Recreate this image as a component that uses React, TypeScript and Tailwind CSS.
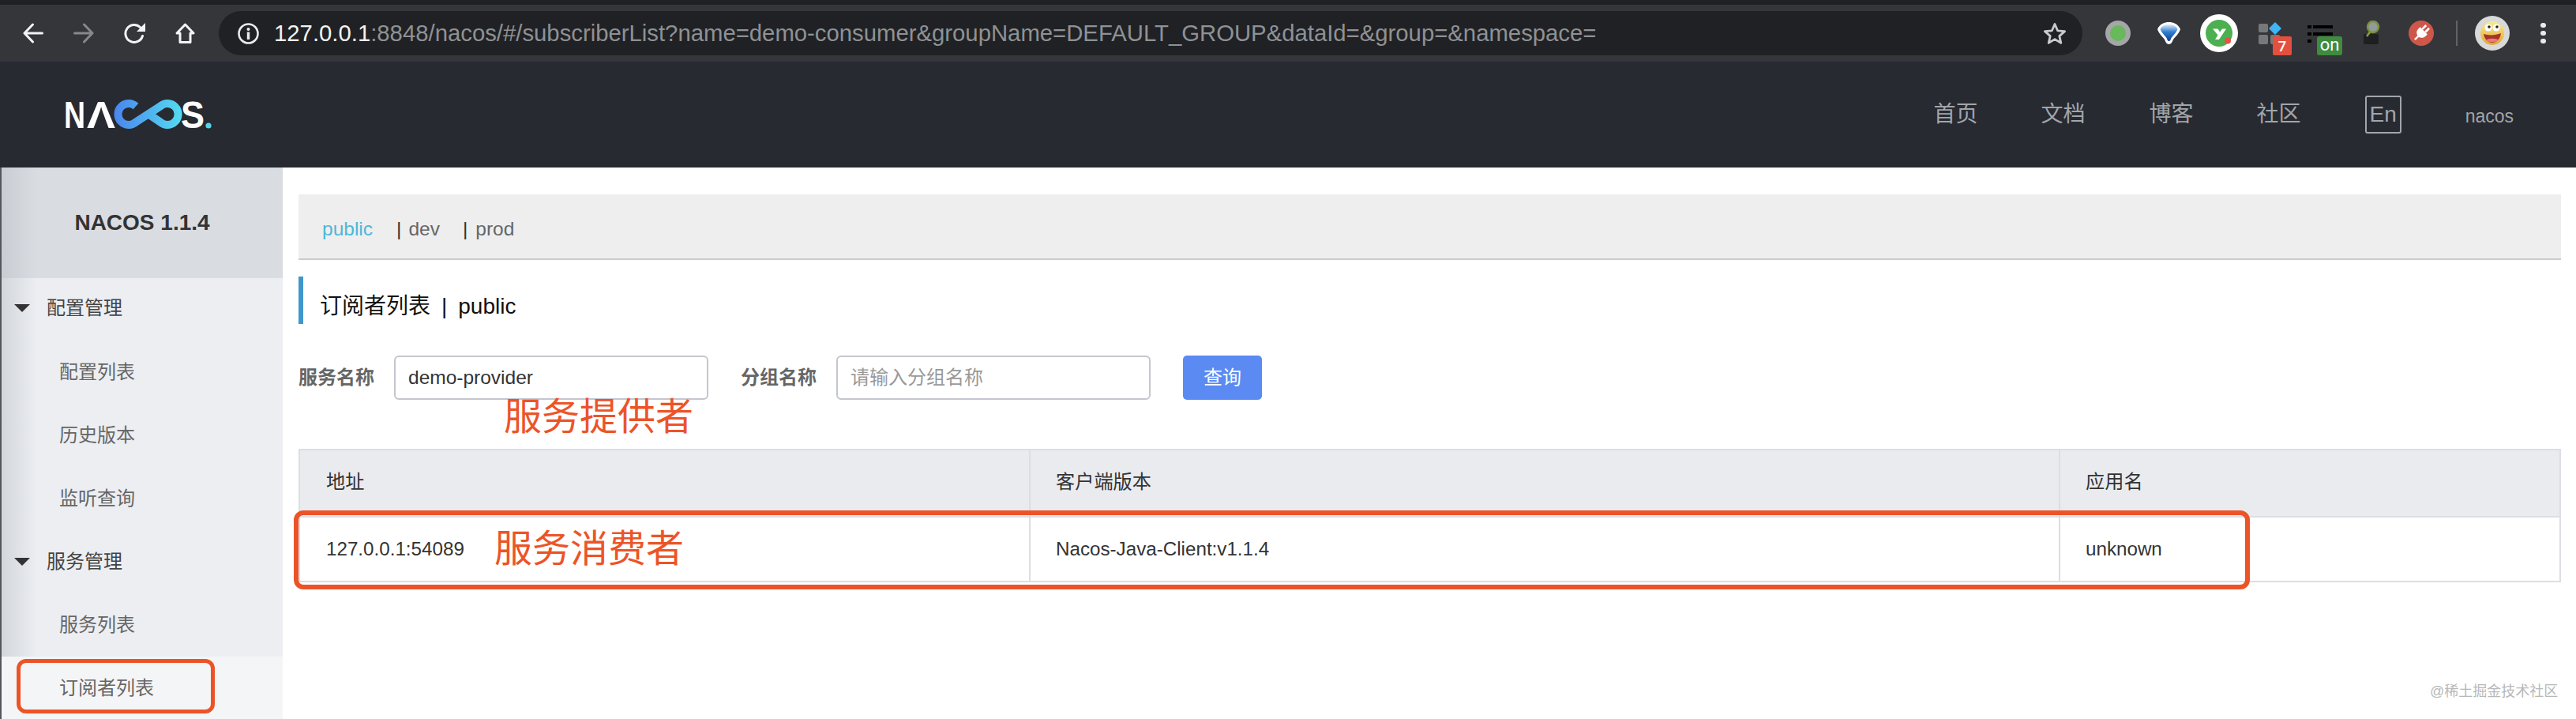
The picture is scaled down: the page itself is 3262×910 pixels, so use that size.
import React from "react";

const URL_REST =
  ":8848/nacos/#/subscriberList?name=demo-consumer&groupName=DEFAULT_GROUP&dataId=&group=&namespace=";

function Logo() {
  return (
    <svg width="210" height="70" viewBox="70 108 210 70">
      <defs>
        <linearGradient id="loop" x1="145" y1="0" x2="231" y2="0" gradientUnits="userSpaceOnUse">
          <stop offset="0" stopColor="#4a86ee" />
          <stop offset="1" stopColor="#54dcf0" />
        </linearGradient>
      </defs>
      <text x="81" y="160" fontFamily="Liberation Sans" fontWeight="700" fontSize="49" fill="#fff" textLength="27" lengthAdjust="spacingAndGlyphs">N</text>
      <text x="110" y="160" fontFamily="Liberation Sans" fontWeight="700" fontSize="49" fill="#fff" textLength="36" lengthAdjust="spacingAndGlyphs">Λ</text>
      <path d="M172 132.500A13.500 13.500 0 1 0 172 152.500L203 132.500A13.500 13.500 0 1 1 203 152.500L189 143" fill="none" stroke="url(#loop)" strokeWidth="10" />
      <text x="229" y="160" fontFamily="Liberation Sans" fontWeight="700" fontSize="49" fill="#fff" textLength="30" lengthAdjust="spacingAndGlyphs">S</text>
      <circle cx="264" cy="157" r="3.600" fill="#54d4ea" />
    </svg>
  );
}

function Toolbar() {
  return (
    <div className="flex h-[72px] shrink-0 items-center bg-[#35363a] pl-[29px]">
      <svg width="26" height="26" viewBox="0 0 26 26" fill="none" stroke="#f1f3f4" strokeWidth="3" strokeLinecap="round" strokeLinejoin="round">
        <path d="M24.500 13H2M12.500 2 2 13l10.500 11" />
      </svg>
      <svg className="ml-[38px]" width="26" height="26" viewBox="0 0 26 26" fill="none" stroke="#87888a" strokeWidth="3" strokeLinecap="round" strokeLinejoin="round">
        <path d="M1.500 13H24M13.500 2 24 13 13.500 24" />
      </svg>
      <svg className="ml-[38px]" width="28" height="26" viewBox="0 0 28 26">
        <path d="M23.500 16.500A11 11 0 1 1 20.500 5.500" fill="none" stroke="#f1f3f4" strokeWidth="3" strokeLinecap="round" />
        <path d="M27 0v11H16z" fill="#f1f3f4" />
      </svg>
      <svg className="ml-[37px]" width="25" height="26" viewBox="0 0 25 26" fill="none" stroke="#f1f3f4" strokeWidth="3" strokeLinejoin="round">
        <path d="M2 13 12.500 2 23 13h-4v11.500H6V13z" />
      </svg>
      <div className="ml-[30px] flex h-[56px] w-[2360px] items-center rounded-full bg-[#202124] pl-[24px] pr-[20px]">
        <svg width="27" height="27" viewBox="0 0 27 27">
          <circle cx="13.500" cy="13.500" r="12" fill="none" stroke="#e8eaed" strokeWidth="2.600" />
          <circle cx="13.500" cy="8" r="2" fill="#e8eaed" />
          <rect x="11.800" y="11.500" width="3.400" height="9.500" fill="#e8eaed" />
        </svg>
        <div className="ml-[19px] whitespace-nowrap text-[29.300px] leading-none text-[#f1f3f4]">
          127.0.0.1<span className="text-[#8f9194]">{URL_REST}</span>
        </div>
        <svg className="ml-auto" width="30" height="28" viewBox="0 0 30 28" fill="none" stroke="#c8cacc" strokeWidth="2.800" strokeLinejoin="round">
          <path d="M15 2.500l3.600 8.300 9 .8-6.800 6 2 8.800L15 21.600 7.200 26.400l2-8.800-6.800-6 9-.8z" />
        </svg>
      </div>

      <div className="ml-[29px] flex h-[32px] w-[32px] items-center justify-center rounded-full bg-[#a5a6a7]">
        <div className="h-[20px] w-[20px] rounded-full bg-[#68b85c]" />
      </div>
      <svg className="ml-[33px]" width="31" height="30" viewBox="0 0 31 30">
        <defs>
          <linearGradient id="gem" x1="0" y1="0" x2="0" y2="1">
            <stop offset="0" stopColor="#dfeaf5" />
            <stop offset="0.45" stopColor="#2f7fd4" />
            <stop offset="1" stopColor="#123f8c" />
          </linearGradient>
        </defs>
        <path d="M1 10C4 3 10 1 15.500 1S27 3 30 10c-2 6-7 10-9 13-1 2-2 6-5.500 6S11 25 10 23C8 20 3 16 1 10z" fill="#fff" />
        <path d="M4.500 10C7 5 11 4 15.500 4s8.500 1 11 6c-2 5-6 8-8 11-1 2-1 4-3 4s-2-2-3-4c-2-3-6-6-8-11z" fill="url(#gem)" />
      </svg>
      <div className="ml-[24px] flex h-[48px] w-[48px] items-center justify-center rounded-full bg-white">
        <svg width="34" height="34" viewBox="0 0 34 34">
          <circle cx="17" cy="17" r="17" fill="#4caf50" />
          <path d="M9 11.500h6.500l2.500 4 3-4h5L17 25h-5l3.500-5.500z" fill="#fff" />
          <circle cx="28" cy="26.500" r="4" fill="#ea5047" />
        </svg>
      </div>
      <div className="relative ml-[26px] mt-[16px] h-[40px] w-[42px] self-start">
        <svg width="32" height="28" viewBox="0 0 32 28" className="absolute left-0 top-[8px] overflow-visible">
          <rect x="0" y="0" width="12" height="11" rx="2" fill="#76787c" />
          <rect x="0" y="14" width="12" height="12" rx="2" fill="#76787c" />
          <rect x="15" y="14" width="12" height="12" rx="2" fill="#76787c" />
          <path d="M21 -2l8 8-8 8-8-8z" fill="#3fb5f5" />
        </svg>
        <div className="absolute left-[18px] top-[24px] flex h-[24px] w-[24px] items-center justify-center rounded-[2px] bg-[#e4503f] font-['Roboto',sans-serif] text-[19px] font-medium leading-none text-white">
          7
        </div>
      </div>
      <div className="relative ml-[20px] mt-[16px] h-[40px] w-[44px] self-start">
        <div className="absolute left-0 top-[10px] flex flex-col gap-[5px]">
          <div className="flex gap-[2px]"><div className="h-[4px] w-[5px] bg-black" /><div className="h-[4px] w-[25px] bg-black" /></div>
          <div className="flex gap-[2px]"><div className="h-[4px] w-[5px] bg-black" /><div className="h-[4px] w-[25px] bg-black" /></div>
          <div className="flex gap-[2px]"><div className="h-[4px] w-[5px] bg-black" /></div>
        </div>
        <div className="absolute left-[12px] top-[24px] flex h-[24px] w-[32px] items-center justify-center rounded-[3px] bg-[#3f8c3f] pb-[2px] font-['Roboto',sans-serif] text-[22px] leading-none text-white">
          on
        </div>
      </div>
      <svg className="ml-[27px]" width="22" height="32" viewBox="0 0 22 32">
        <rect x="0" y="17" width="19" height="13" rx="2" fill="#1e1f21" />
        <path d="M4 20l6-8" stroke="#8aa03c" strokeWidth="2.500" />
        <circle cx="12" cy="8" r="7" fill="#8f9c98" stroke="#7d9140" strokeWidth="2.500" />
      </svg>
      <svg className="ml-[35px]" width="32" height="32" viewBox="0 0 32 32">
        <circle cx="16" cy="16" r="16" fill="#cf574a" />
        <g transform="rotate(45 16 16)" fill="#fff">
          <rect x="12" y="4.500" width="2.600" height="7" />
          <rect x="17.400" y="4.500" width="2.600" height="7" />
          <path d="M9.500 11.500h13V15a6.500 6.500 0 0 1-13 0z" />
          <rect x="14.800" y="21" width="2.400" height="6.500" />
        </g>
      </svg>
      <div className="ml-[28px] h-[32px] w-[2px] bg-[#626366]" />
      <svg className="ml-[22px]" width="44" height="44" viewBox="0 0 44 44">
        <defs>
          <linearGradient id="face" x1="0" y1="0" x2="0" y2="1">
            <stop offset="0" stopColor="#f8ec92" />
            <stop offset="1" stopColor="#e2a62e" />
          </linearGradient>
        </defs>
        <circle cx="22" cy="22" r="22" fill="#d9d9d9" />
        <circle cx="22" cy="22" r="15" fill="url(#face)" />
        <circle cx="17" cy="15" r="4.500" fill="#fff" />
        <circle cx="27" cy="15" r="4.500" fill="#fff" />
        <circle cx="18" cy="14" r="1.800" fill="#222" />
        <circle cx="28" cy="14" r="1.800" fill="#222" />
        <path d="M11 23c6 2 15 2 22-1-1 8-6 12-11 12s-10-4-11-11z" fill="#a8322a" />
        <path d="M14 31c3-3 13-3 16 0-4 3-12 3-16 0z" fill="#e87a80" />
      </svg>
      <div className="ml-[39px] flex flex-col gap-[3.500px]">
        <div className="h-[6.500px] w-[6.500px] rounded-full bg-[#e8eaed]" />
        <div className="h-[6.500px] w-[6.500px] rounded-full bg-[#e8eaed]" />
        <div className="h-[6.500px] w-[6.500px] rounded-full bg-[#e8eaed]" />
      </div>
    </div>
  );
}

function Header() {
  return (
    <div className="flex h-[134px] shrink-0 items-center bg-[#272a31] pl-[70px] text-[#a2a5a9]">
      <Logo />
      <div className="ml-auto flex items-center text-[28px] leading-none">
        <span>首页</span>
        <span className="ml-[80px]">文档</span>
        <span className="ml-[81px]">博客</span>
        <span className="ml-[80px]">社区</span>
        <span className="ml-[81px] flex h-[48px] w-[46px] items-center justify-center rounded-[3px] border-2 border-[#a2a5a9]">En</span>
        <span className="ml-[81px] mr-[79px] mt-[4px] text-[23px]">nacos</span>
      </div>
    </div>
  );
}

function Sidebar() {
  const Group = ({ label, first }: { label: string; first?: boolean }) => (
    <div className={first ? "flex h-[79px] items-center pb-[3px] pl-[16px] text-[#444]" : "flex h-[80px] items-center pl-[16px] text-[#444]"}>
      <div className="h-0 w-0 border-x-[10px] border-t-[10px] border-x-transparent border-t-[#333]" />
      <span className="ml-[21px]">{label}</span>
    </div>
  );
  const Item = ({ label, active }: { label: string; active?: boolean }) => (
    <div className={active ? "flex h-[79px] items-center bg-[#f4f5f7] pl-[73px] text-[#666]" : "flex h-[80px] items-center pl-[73px] text-[#666]"}>
      {label}
    </div>
  );
  return (
    <div className="flex w-[358px] shrink-0 flex-col border-l-2 border-[#55575c] bg-[linear-gradient(to_right,#d3d6db,#eceef2_45px)] text-[24px] leading-none">
      <div className="flex h-[140px] items-center justify-center bg-[linear-gradient(to_right,#c9ccd2,#d9dce1_45px)] text-[28px] font-bold text-[#333]">
        NACOS 1.1.4
      </div>
      <Group label="配置管理" first />
      <Item label="配置列表" />
      <Item label="历史版本" />
      <Item label="监听查询" />
      <Group label="服务管理" />
      <Item label="服务列表" />
      <Item label="订阅者列表" active />
    </div>
  );
}

function Main() {
  return (
    <div className="flex-1 pl-[20px] pr-[19px] pt-[34px]">
      <div className="flex h-[83px] items-center border-b-2 border-[#cccccc] bg-[#eeeeee] pl-[30px] pt-[8px] text-[24.500px] leading-none text-[#666]">
        <span className="text-[#4fb7d6]">public</span>
        <span className="ml-[30px] text-[#333]">|</span>
        <span className="ml-[9px]">dev</span>
        <span className="ml-[29px] text-[#333]">|</span>
        <span className="ml-[10px]">prod</span>
      </div>
      <div className="mt-[21px] flex h-[60px] items-center border-l-[6px] border-[#3f97cb] pl-[21px] pt-[16px] text-[28px] leading-none text-[#111]">
        <span>订阅者列表</span>
        <span className="ml-[14px]">|</span>
        <span className="ml-[14px]">public</span>
      </div>
      <div className="mt-[40px] flex h-[56px] items-center text-[24px]">
        <span className="w-[96px] font-bold text-[#666]">服务名称</span>
        <input
          readOnly
          value="demo-provider"
          className="ml-[25px] h-[56px] w-[398px] rounded-[6px] border-2 border-[#c4c6cf] bg-white px-[16px] text-[24.500px] text-[#333] outline-none"
        />
        <span className="ml-[41px] w-[96px] font-bold text-[#666]">分组名称</span>
        <input
          readOnly
          placeholder="请输入分组名称"
          className="ml-[25px] h-[56px] w-[398px] rounded-[6px] border-2 border-[#c4c6cf] bg-white px-[16px] text-[24px] text-[#333] outline-none placeholder:text-[#999]"
        />
        <button className="ml-[41px] h-[56px] w-[100px] rounded-[5px] bg-[#5b8af2] text-[24px] text-white">查询</button>
      </div>
      <div className="mt-[62px] border-2 border-[#dcdee3] text-[24.200px] leading-none text-[#333]">
        <div className="grid h-[83px] grid-cols-[925px_1304px_1fr] items-stretch bg-[#e9ebef]">
          <div className="flex items-center border-r-2 border-[#dcdee3] pb-[2px] pl-[33px]">地址</div>
          <div className="flex items-center border-r-2 border-[#dcdee3] pb-[2px] pl-[32px]">客户端版本</div>
          <div className="flex items-center pb-[2px] pl-[32px]">应用名</div>
        </div>
        <div className="grid h-[82px] grid-cols-[925px_1304px_1fr] items-stretch border-t-2 border-[#dcdee3]">
          <div className="flex items-center border-r-2 border-[#dcdee3] pl-[33px]">127.0.0.1:54089</div>
          <div className="flex items-center border-r-2 border-[#dcdee3] pl-[32px]">Nacos-Java-Client:v1.1.4</div>
          <div className="flex items-center pl-[32px]">unknown</div>
        </div>
      </div>
    </div>
  );
}

export default function App() {
  return (
    <div className="relative flex h-[910px] w-[3262px] flex-col overflow-hidden bg-white font-['Liberation_Sans','Noto_Sans_CJK_SC',sans-serif]">
      <div className="h-[6px] shrink-0 bg-[#202124]" />
      <Toolbar />
      <Header />
      <div className="flex min-h-0 flex-1">
        <Sidebar />
        <Main />
      </div>

      <div className="absolute left-[21px] top-[834px] h-[69px] w-[251px] rounded-[12px] border-[5px] border-[#ec5428]" />
      <div className="absolute left-[372px] top-[646px] h-[100px] w-[2477px] rounded-[12px] border-[6px] border-[#ec5428]" />
      <div className="absolute left-[638px] top-[504px] text-[48px] leading-none text-[#ec5428]">服务提供者</div>
      <div className="absolute left-[626px] top-[671px] text-[48px] leading-none text-[#ec5428]">服务消费者</div>
      <div className="absolute left-[3077px] top-[865px] text-[18px] leading-[20px] text-[#b8b8b8]">@稀土掘金技术社区</div>
    </div>
  );
}
